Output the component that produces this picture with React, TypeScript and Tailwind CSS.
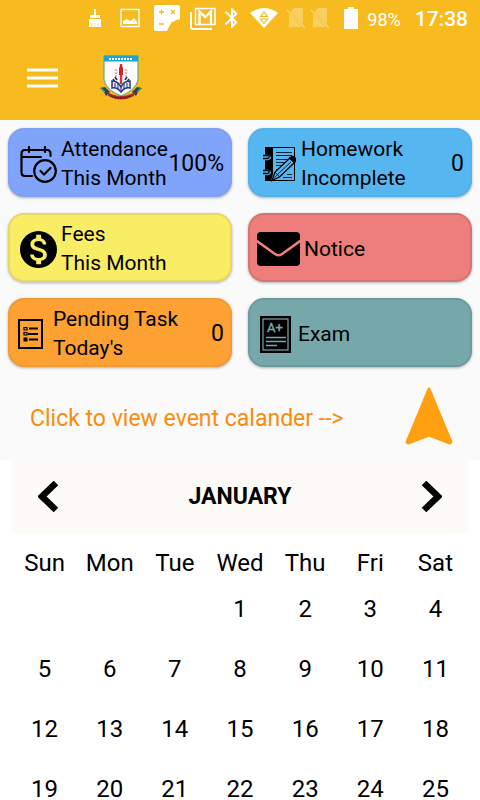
import { ReactNode, useState } from 'react'
import clsx from 'clsx'
import { MdBluetooth, MdMonetizationOn } from 'react-icons/md'

const weekdays = ['Sun', 'Mon', 'Tue', 'Wed', 'Thu', 'Fri', 'Sat']

const months = [
  'JANUARY',
  'FEBRUARY',
  'MARCH',
  'APRIL',
  'MAY',
  'JUNE',
  'JULY',
  'AUGUST',
  'SEPTEMBER',
  'OCTOBER',
  'NOVEMBER',
  'DECEMBER',
]

const getWeeks = (year: number, month: number) => {
  const offset = new Date(year, month, 1).getDay()
  const days = new Date(year, month + 1, 0).getDate()
  const weeks: (number | null)[][] = []
  for (let start = 1 - offset; start <= days; start += 7) {
    weeks.push(
      weekdays.map((_, i) => {
        const day = start + i
        return day > 0 && day <= days ? day : null
      }),
    )
  }
  return weeks
}

const AttendanceIcon = () => (
  <svg
    className="ml-1 mr-1 h-[37px] w-[37px] shrink-0"
    viewBox="0 0 37 37"
    fill="none"
    stroke="#000"
    strokeWidth="2.2"
    strokeLinecap="round"
    strokeLinejoin="round"
  >
    <path d="M12 30H5Q1.5 30 1.5 26.5V8Q1.5 4 5 4H27Q30.5 4 30.5 8V10M1.5 11H21M9 1V6M25 1V6" />
    <circle cx="25" cy="25" r="10.8" />
    <path d="M20.5 25L24 28.5L30.5 22" />
  </svg>
)

const HomeworkIcon = () => (
  <svg
    className="ml-1.5 mr-[5px] h-[36px] w-[34px] shrink-0"
    viewBox="0 0 34 36"
    fill="none"
    stroke="#000"
  >
    <path d="M4 1.5H32.5V34.5H4" />
    <path d="M3 1H11V28L9 35H3Z" fill="#000" stroke="none" />
    <path
      d="M14 6.5H30M14 9.5H30M14 13.5H27M14 16.5H23M14 19.5H20M14 23.5H17M25 28.5H30M21 31.5H30"
      strokeOpacity="0.8"
    />
    <path d="M0 10.500H6Q8.500 11.500 6 12.500H0M0 25.500H6Q8.500 26.500 6 27.500H0" stroke="#56b6f0" strokeWidth="3.5" />
    <path d="M1 9.500H6Q8.500 11 6 12.500H1M1 24.500H6Q8.500 26 6 27.500H1" strokeWidth="1.300" />
    <path d="M10 34.5L13 26L28 12Q31 9 33 12Q35 14 32 17L17.5 31Z" fill="#56b6f0" strokeWidth="1.3" />
    <path d="M13 26L17.5 31M10 34.5L17 27L29 16" strokeWidth="0.8" />
    <path d="M27 12L32 17L34 13L31 10Z" fill="#000" />
  </svg>
)

const NoticeIcon = () => (
  <svg className="ml-px mr-1 h-[34px] w-[43px] shrink-0" viewBox="0 0 43 34">
    <rect width="43" height="34" rx="4" />
    <path
      d="M-1 8.500L18 22Q21.500 24.500 25 22L44 8.500"
      fill="none"
      stroke="#ed7e7b"
      strokeWidth="2.600"
    />
  </svg>
)

const TaskIcon = () => (
  <svg
    className="ml-0.5 mr-2.5 h-[30px] w-[25px] shrink-0"
    viewBox="0 0 25 30"
    fill="none"
    stroke="#000"
    strokeWidth="2"
  >
    <path d="M1 1H24V29H1Z" />
    <path d="M11 9.500H20M10 15H20M11 20.500H20" />
    <path d="M6 8.500H9V11H6ZM6 13.500H9V16H6Z" strokeWidth="1.200" />
    <path d="M5.500 18.500H9.500V22.500H5.500Z" fill="#000" stroke="none" />
  </svg>
)

const ExamIcon = () => (
  <svg className="ml-1 mr-[7px] h-[37px] w-[31px] shrink-0" viewBox="0 0 31 37">
    <rect width="31" height="37" />
    <rect x="3" y="3" width="25" height="31" fill="none" stroke="#76a8ab" strokeWidth="1.200" />
    <text
      x="7"
      y="16"
      fill="#76a8ab"
      stroke="#76a8ab"
      strokeWidth="0.400"
      className="font-['Roboto',sans-serif] text-[13px]"
    >
      A+
    </text>
    <path d="M6 21.500H26M6 25.500H26M6 29.500H17" stroke="#76a8ab" strokeWidth="1.500" />
  </svg>
)

const SchoolCrest = () => (
  <svg className="h-[48px] w-[44px]" viewBox="0 0 44 48">
    <path d="M5 2H39V26Q37 36 22 42Q7 36 5 26Z" fill="#fff" stroke="#5fae7b" strokeWidth="1.200" />
    <path d="M5 1.500H39V7.500H5Z" fill="#16a5dc" />
    <path d="M10 5H34" stroke="#fff" strokeWidth="2" strokeDasharray="2 1" />
    <path d="M22 10V30" stroke="#e02b2b" strokeWidth="2.400" />
    <path d="M20 14L22 11L24 14V21H20Z" fill="#d91f26" />
    <path d="M17 15V24M27 15V24" stroke="#ee8d84" strokeWidth="1.400" strokeDasharray="2 1" />
    <path d="M18 26L16 23M26 26L28 23M18 31L14 25M26 31L30 25" stroke="#22295f" strokeWidth="1.600" />
    <path
      d="M22 38Q18 33 13 34V27Q19 27 22 33Q25 27 31 27V34Q26 33 22 38Z"
      fill="#dfe6f6"
      stroke="#293879"
      strokeWidth="1.500"
    />
    <path d="M16 29V34M19 30V35M25 30V35M28 29V34M22 31V38" stroke="#293879" />
    <path d="M1 34L6 33L11 38L7 42L5 38Z" fill="#28415c" />
    <path d="M43 34L38 33L33 38L37 42L39 38Z" fill="#28415c" />
    <path d="M2 34L6 38M42 34L38 38" stroke="#4b9d62" strokeWidth="1.300" />
    <path d="M8 38Q22 46 36 38L35 42Q22 49 9 42Z" fill="#b12b23" />
    <path d="M12 42Q22 46 32 42" fill="none" stroke="#512125" strokeWidth="1.500" strokeDasharray="2 1" />
  </svg>
)

const SimOffIcon = ({ className }: { className: string }) => (
  <svg className={clsx('h-[22px] w-[20px]', className)} viewBox="0 0 20 22">
    <path d="M8 1H17V20H3V6Z" fill="#fff" fillOpacity="0.300" />
    <path d="M1 3L19 21" stroke="#f7bb1f" strokeWidth="3" />
    <path d="M1 3L19 21" stroke="#fff" strokeOpacity="0.400" strokeWidth="1.500" />
  </svg>
)

const StatusBar = () => (
  <div className="flex h-9 items-center pl-[86px] pr-3 text-white">
    <svg className="h-[20px] w-[18px]" viewBox="0 0 18 20" fill="#fff">
      <path d="M8 1H10V7H14V10H4V7H8ZM3 11H15V19H3Z" />
      <path d="M6 15V19M9 15V19M12 15V19" stroke="#f7bb1f" strokeWidth="0.500" />
    </svg>
    <svg className="ml-4 h-[20px] w-[20px]" viewBox="0 0 20 20" fill="none">
      <path d="M1 1.500H19V18.500H1Z" stroke="#fff" strokeWidth="1.400" />
      <path d="M3 16V13L7 11L10 13L14 10L17 14V16Z" fill="#fff" />
    </svg>
    <svg className="ml-3.5 h-[27px] w-[26px]" viewBox="0 0 26 27">
      <path d="M2 0H24Q26 0 26 2V14Q17 15 13 26H2Q0 26 0 24V2Q0 0 2 0Z" fill="#fff" />
      <path
        d="M5 7H10M7.500 4.500V9.500M17 5L21 9M21 5L17 9M5 19H10M17 18H22M17 20H22"
        stroke="#f7bb1f"
        strokeWidth="1.300"
      />
    </svg>
    <svg className="ml-2.5 h-[23px] w-[26px]" viewBox="0 0 26 23" fill="none" stroke="#fff">
      <path d="M1 5V20Q1 22 3 22H22" strokeWidth="2" />
      <path d="M5.500 1.500H25V17.500H5.500Z" strokeWidth="1.600" strokeLinejoin="round" />
      <path d="M9.500 17V4.500L15.200 10L21 4.500V17" strokeWidth="2.400" />
    </svg>
    <MdBluetooth className="ml-1 h-6 w-6" />
    <svg className="ml-1.5 h-[20px] w-[28px]" viewBox="0 0 28 20">
      <path d="M0 5Q14 -5 28 5L14 20Z" fill="#fff" />
      <path
        d="M10.500 8.500L14 4L17.500 8.500ZM10.500 11L14 15.500L17.500 11Z"
        fill="none"
        stroke="#f7bb1f"
        strokeWidth="1.200"
      />
    </svg>
    <SimOffIcon className="ml-2" />
    <SimOffIcon className="ml-1" />
    <svg className="ml-3.5 h-[22px] w-[14px]" viewBox="0 0 14 22" fill="#fff">
      <path d="M4 0H10V2H14V22H0V2H4Z" />
    </svg>
    <span className="ml-auto pt-0.5 text-[18px]">98%</span>
    <span className="pt-1 pl-[14px] text-[21px] font-medium">17:38</span>
  </div>
)

type CardProps = {
  icon: ReactNode
  lines: string[]
  value?: string
  color: string
}

const Card = ({ icon, lines, value, color }: CardProps) => (
  <button
    className={clsx(
      'flex h-[69px] items-center rounded-2xl border-2 px-1.5 pt-[3px] text-left shadow-[0_1px_3px_rgba(0,0,0,0.3)]',
      color,
    )}
  >
    {icon}
    <span className="text-[21px] leading-[29px] whitespace-nowrap">
      {lines.map((line) => (
        <span className="block" key={line}>
          {line}
        </span>
      ))}
    </span>
    {value && <span className="ml-auto text-[23px]">{value}</span>}
  </button>
)

export default function App() {
  const [date, setDate] = useState({ year: 2020, month: 0 })

  const moveMonth = (step: number) =>
    setDate(({ year, month }) => {
      const next = new Date(year, month + step, 1)
      return { year: next.getFullYear(), month: next.getMonth() }
    })

  return (
    <div className="flex h-screen flex-col overflow-hidden bg-[#fafafa] font-['Roboto',sans-serif] text-black">
      <header className="shrink-0 bg-[#f7bb1f]">
        <StatusBar />
        <div className="flex h-[84px] items-center pl-[27px]">
          <button aria-label="Open menu">
            <svg className="h-[20px] w-[31px]" viewBox="0 0 31 20">
              <path d="M0 2H31M0 10H31M0 18H31" stroke="#fff" strokeWidth="3" />
            </svg>
          </button>
          <div className="pl-[41px]">
            <SchoolCrest />
          </div>
        </div>
      </header>

      <main className="grow overflow-y-auto [scrollbar-width:none]">
        <div className="grid grid-cols-2 gap-4 px-2 pt-2">
          <Card
            icon={<AttendanceIcon />}
            lines={['Attendance', 'This Month']}
            value="100%"
            color="border-[#7fa1f4] bg-[#80a4f9]"
          />
          <Card
            icon={<HomeworkIcon />}
            lines={['Homework', 'Incomplete']}
            value="0"
            color="border-[#55b1e8] bg-[#56b6f0]"
          />
          <Card
            icon={
              <MdMonetizationOn
                className="ml-1 mr-1 h-[37px] w-[37px] shrink-0"
                viewBox="2 2 20 20"
              />
            }
            lines={['Fees', 'This Month']}
            color="border-[#e6da62] bg-[#f9ed65]"
          />
          <Card icon={<NoticeIcon />} lines={['Notice']} color="border-[#d67375] bg-[#ed7e7b]" />
          <Card
            icon={<TaskIcon />}
            lines={['Pending Task', "Today's"]}
            value="0"
            color="border-[#f19b35] bg-[#fca132]"
          />
          <Card icon={<ExamIcon />} lines={['Exam']} color="border-[#6a9a9c] bg-[#76a8ab]" />
        </div>

        <button className="flex h-[93px] w-full items-center justify-between pt-1 pl-[30px] pr-[26px] text-[23px] text-[#fb8c0b]">
          <span className="pt-2">Click to view event calander --&gt;</span>
          <svg className="h-[60px] w-[50px]" viewBox="0 0 50 60">
            <path
              d="M25 3L47 56L46 57L25 49L4 57L3 56Z"
              fill="#ffa010"
              stroke="#ffa010"
              strokeWidth="3"
              strokeLinejoin="round"
            />
          </svg>
        </button>

        <section className="bg-white px-3">
          <div className="flex h-[73px] items-center justify-between bg-[#fcfbf8] px-[26px]">
            <button aria-label="Previous month" onClick={() => moveMonth(-1)}>
              <svg className="h-[32px] w-[21px]" viewBox="0 0 21 32" fill="none">
                <path d="M18 2L4 15.500L18 29" stroke="#000" strokeWidth="6.500" />
              </svg>
            </button>
            <h2 className="pt-0.5 text-[23px] font-bold">{months[date.month]}</h2>
            <button aria-label="Next month" onClick={() => moveMonth(1)}>
              <svg className="h-[32px] w-[21px]" viewBox="0 0 21 32" fill="none">
                <path d="M3 2L17 15.500L3 29" stroke="#000" strokeWidth="6.500" />
              </svg>
            </button>
          </div>
          <table className="w-full table-fixed text-center text-[24px] leading-8">
            <thead>
              <tr className="h-[46px]">
                {weekdays.map((day) => (
                  <th className="pt-3.5 font-normal" key={day}>
                    {day}
                  </th>
                ))}
              </tr>
            </thead>
            <tbody>
              {getWeeks(date.year, date.month).map((week, i) => (
                <tr className="h-[60px]" key={i}>
                  {week.map((day, j) => (
                    <td key={j}>{day}</td>
                  ))}
                </tr>
              ))}
            </tbody>
          </table>
        </section>
      </main>
    </div>
  )
}
